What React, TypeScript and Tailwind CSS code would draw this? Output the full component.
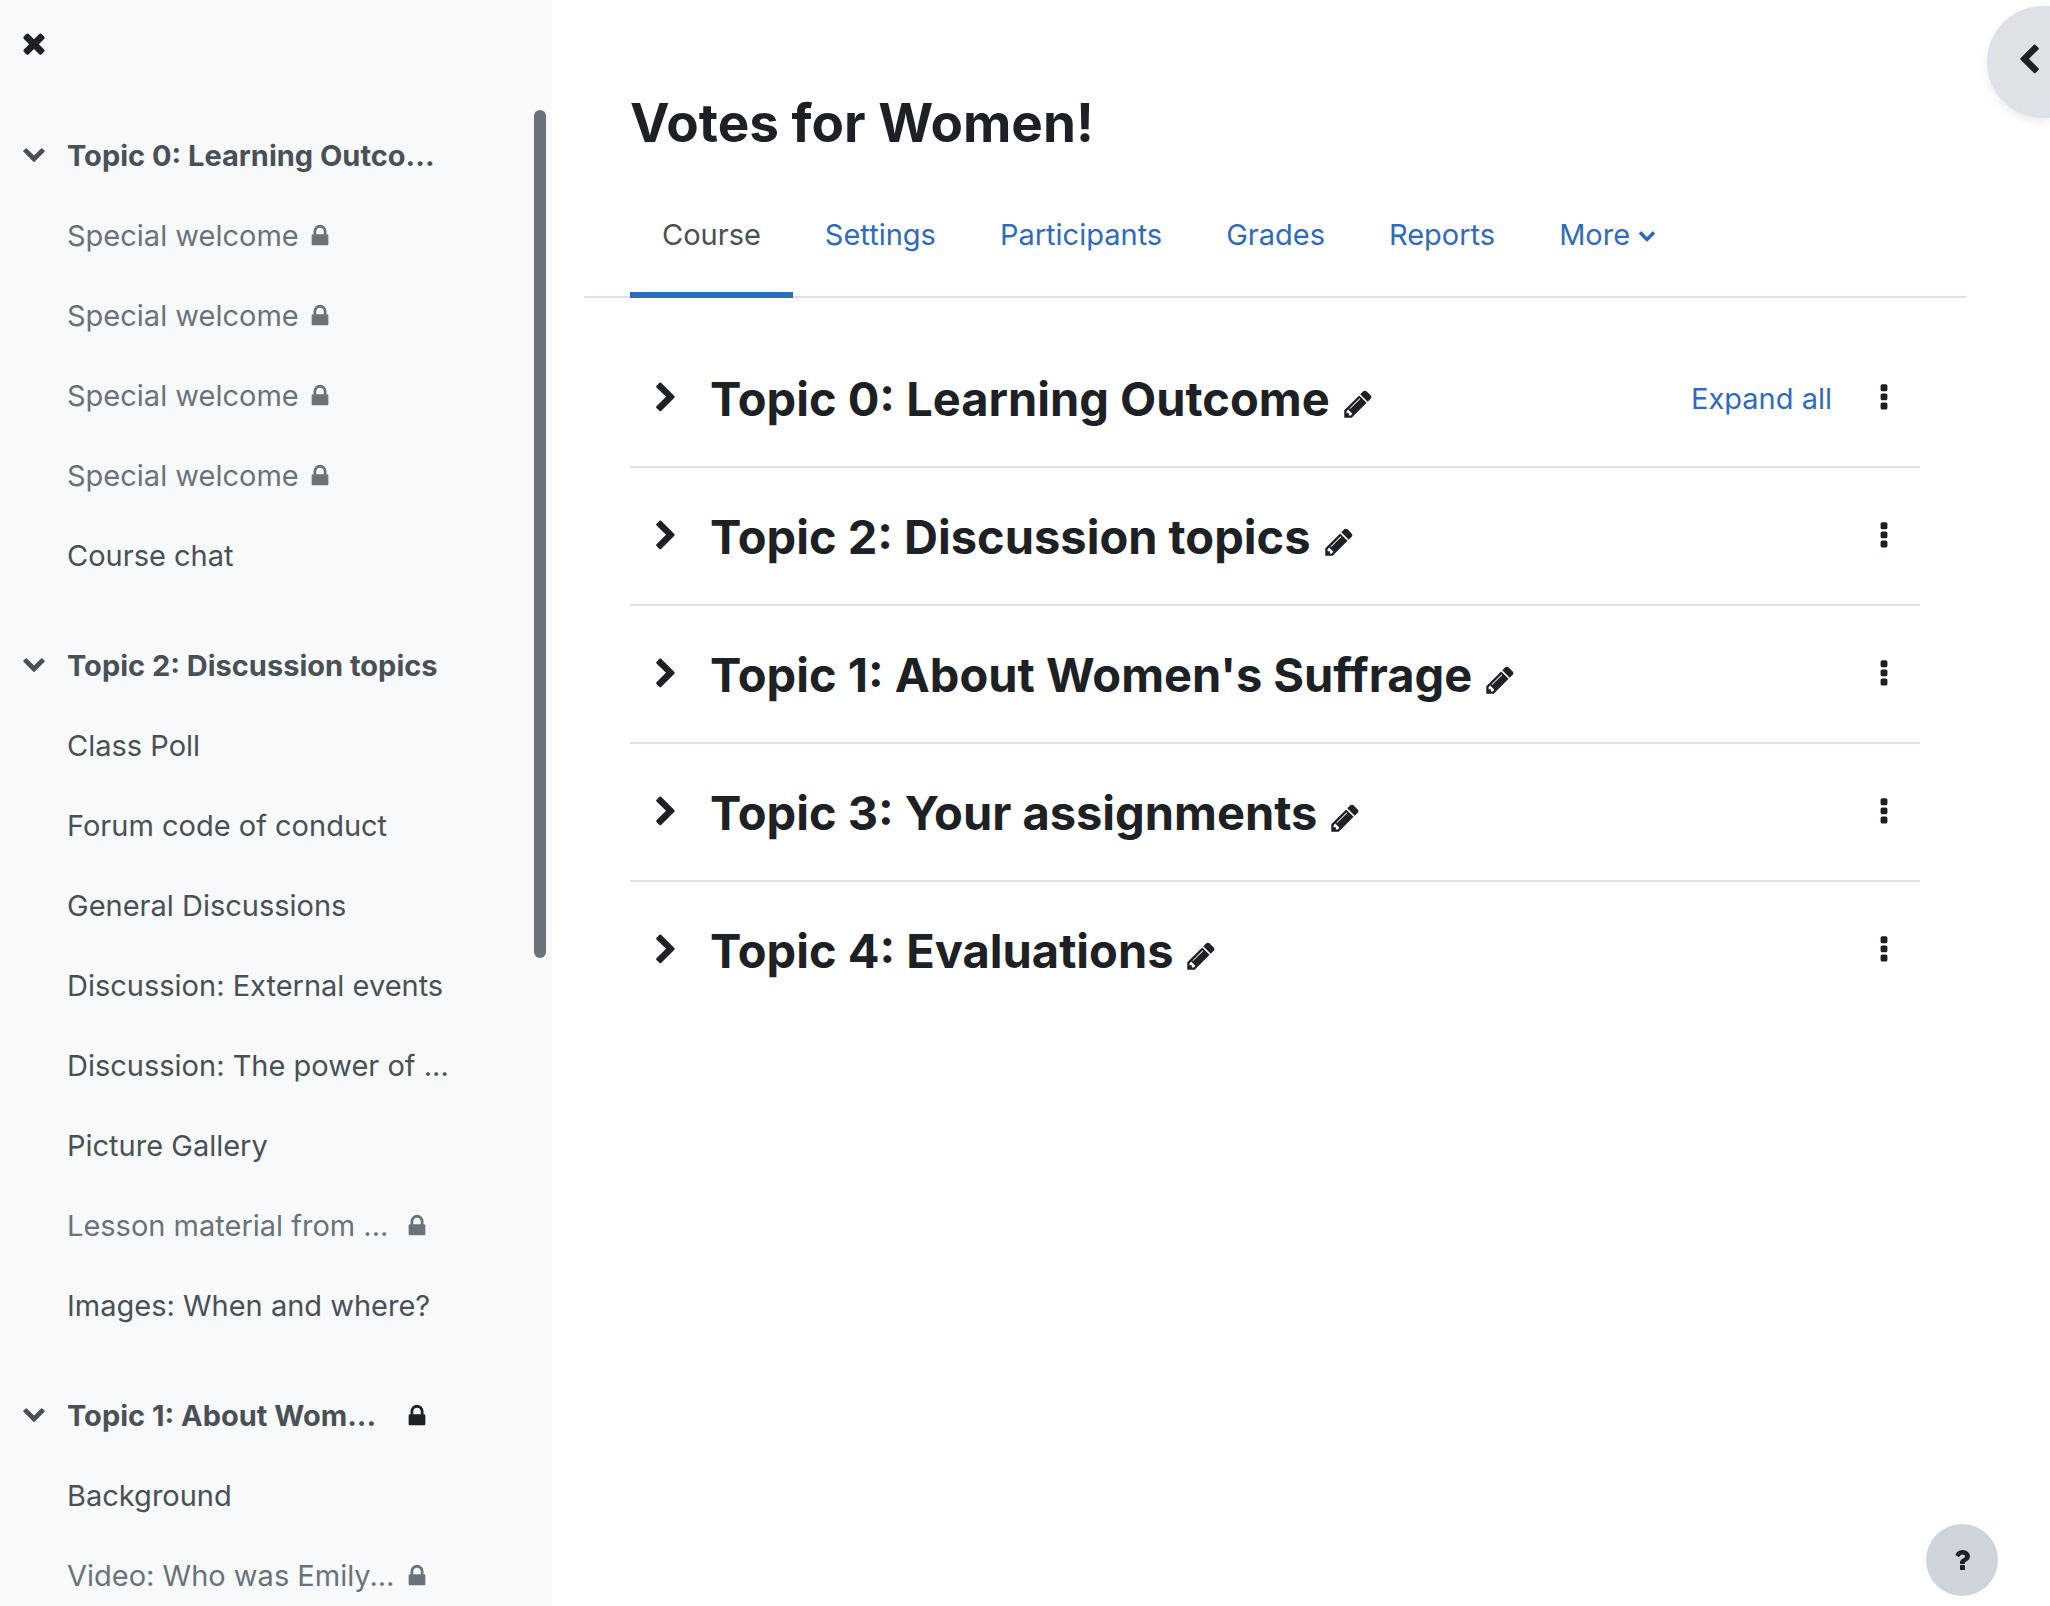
import { useState } from "react";
import { clsx } from "clsx";

const icons = {
  times: "M1490 1322q0 40-28 68l-136 136q-28 28-68 28t-68-28l-294-294-294 294q-28 28-68 28t-68-28l-136-136q-28-28-28-68t28-68l294-294-294-294q-28-28-28-68t28-68l136-136q28-28 68-28t68 28l294 294 294-294q28-28 68-28t68 28l136 136q28 28 28 68t-28 68l-294 294 294 294q28 28 28 68z",
  chevronRight: "M1363 877l-742 742q-19 19-45 19t-45-19l-166-166q-19-19-19-45t19-45l531-531-531-531q-19-19-19-45t19-45l166-166q19-19 45-19t45 19l742 742q19 19 19 45t-19 45z",
  chevronLeft: "M1427 301l-531 531 531 531q19 19 19 45t-19 45l-166 166q-19 19-45 19t-45-19l-742-742q-19-19-19-45t19-45l742-742q19-19 45-19t45 19l166 166q19 19 19 45t-19 45z",
  chevronDown: "M1683 808l-742 741q-19 19-45 19t-45-19l-742-741q-19-19-19-45.500t19-45.500l166-165q19-19 45-19t45 19l531 531 531-531q19-19 45-19t45 19l166 165q19 19 19 45.500t-19 45.500z",
  lock: "M640 768h512v-192q0-106-75-181t-181-75-181 75-75 181v192zm832 96v576q0 40-28 68t-68 28h-960q-40 0-68-28t-28-68v-576q0-40 28-68t68-28h32v-192q0-184 132-316t316-132 316 132 132 316v192h32q40 0 68 28t28 68z",
  pencil: "M491 1536l91-91-235-235-91 91v107h128v128h107zm523-928q0-22-22-22-10 0-17 7l-542 542q-7 7-7 17 0 22 22 22 10 0 17-7l542-542q7-7 7-17zm-54-192l416 416-832 832h-416v-416zm683 96q0 53-37 90l-166 166-416-416 166-165q36-38 90-38 53 0 91 38l235 234q37 39 37 91z",
  ellipsis: "M1088 1248v192q0 40-28 68t-68 28h-192q-40 0-68-28t-28-68v-192q0-40 28-68t68-28h192q40 0 68 28t28 68zm0-512v192q0 40-28 68t-68 28h-192q-40 0-68-28t-28-68v-192q0-40 28-68t68-28h192q40 0 68 28t28 68zm0-512v192q0 40-28 68t-68 28h-192q-40 0-68-28t-28-68v-192q0-40 28-68t68-28h192q40 0 68 28t28 68z",
  question: "M1088 1256v240q0 16-12 28t-28 12h-240q-16 0-28-12t-12-28v-240q0-16 12-28t28-12h240q16 0 28 12t12 28zm316-600q0 54-15.500 101t-35 76.500-55 59.500-57.500 43.500-61 35.500q-41 23-68.500 65t-27.500 67q0 17-12 32.500t-28 15.500h-240q-15 0-25.500-18.500t-10.500-37.500v-45q0-83 65-156.500t143-108.500q59-27 84-56t25-76q0-42-46.500-74t-107.500-32q-65 0-108 29-35 25-107 115-13 16-31 16-12 0-25-8l-164-125q-13-10-15.500-25t5.500-28q160-266 464-266 80 0 161 31t146 83 106 127.500 41 158.500z",
};

const Icon = ({ name, className }: { name: keyof typeof icons; className: string }) => (
  <svg viewBox="0 0 1792 1792" fill="currentColor" aria-hidden="true" className={clsx("shrink-0", className)}>
    <path d={icons[name]} />
  </svg>
);

type Item = { title: string; locked?: boolean };

const sections: { title: string; locked?: boolean; items: Item[] }[] = [
  {
    title: "Topic 0: Learning Outco...",
    items: [
      { title: "Special welcome", locked: true },
      { title: "Special welcome", locked: true },
      { title: "Special welcome", locked: true },
      { title: "Special welcome", locked: true },
      { title: "Course chat" },
    ],
  },
  {
    title: "Topic 2: Discussion topics",
    items: [
      { title: "Class Poll" },
      { title: "Forum code of conduct" },
      { title: "General Discussions" },
      { title: "Discussion: External events" },
      { title: "Discussion: The power of ..." },
      { title: "Picture Gallery" },
      { title: "Lesson material from ...", locked: true },
      { title: "Images: When and where?" },
    ],
  },
  {
    title: "Topic 1: About Wom...",
    locked: true,
    items: [
      { title: "Background" },
      { title: "Video: Who was Emily...", locked: true },
    ],
  },
];

const tabs = ["Course", "Settings", "Participants", "Grades", "Reports"];

const topics = [
  "Topic 0: Learning Outcome",
  "Topic 2: Discussion topics",
  "Topic 1: About Women's Suffrage",
  "Topic 3: Your assignments",
  "Topic 4: Evaluations",
];

// shortened titles fill the column, so their lock sits at its right edge
const titleWidth = (title: string) => (title.endsWith("...") ? "w-[329px]" : "");

const CourseIndex = () => (
  <aside className="relative w-[552px] h-screen shrink-0 overflow-hidden bg-[#f8f9fb] text-[#495057]">
    <div className="h-[110px] px-[18px] pt-[27px]">
      <button aria-label="Close course index" className="block text-[#1d2125]">
        <Icon name="times" className="size-8" />
      </button>
    </div>
    <nav aria-label="Course index" className="pt-1.5">
      {sections.map((section) => (
        <div key={section.title} className="mb-[30px]">
          <div className="flex items-center h-20 pl-[22px]">
            <button aria-label={`Collapse ${section.title}`} className="mr-[21px] mb-1.5">
              <Icon name="chevronDown" className="size-6" />
            </button>
            <a href="#" className={clsx("font-bold whitespace-nowrap", section.locked && titleWidth(section.title))}>
              {section.title}
            </a>
            {section.locked && <Icon name="lock" className="size-[26px] ml-2 text-[#1d2125]" />}
          </div>
          <ul>
            {section.items.map((item, i) => (
              <li key={i} className={clsx("flex items-center h-20 pl-[67px]", item.locked && "text-[#6a737b]")}>
                <a href="#" className={clsx("whitespace-nowrap", item.locked && titleWidth(item.title))}>
                  {item.title}
                </a>
                {item.locked && <Icon name="lock" className="size-[26px] ml-2" />}
              </li>
            ))}
          </ul>
        </div>
      ))}
    </nav>
    {/* SCROLLBAR */}
    <div className="absolute top-[110px] right-1.5 w-3 h-[848px] rounded-full bg-[#6a737b]" />
  </aside>
);

const App = () => {
  const [activeTab, setActiveTab] = useState("Course");

  return (
    <div className="flex h-screen overflow-hidden bg-white text-[#1d2125] text-[29px] leading-[44px] font-['Inter',sans-serif]">
      <CourseIndex />

      <main className="flex-1 min-w-0 pl-8 pr-[84px] pt-[89px]">
        <h1 className="pl-[46px] text-[53px] leading-[68px] font-bold">Votes for Women!</h1>

        {/* TABS */}
        <nav className="flex mt-[23px] px-[46px] border-b-2 border-[#dee2e6]">
          {tabs.map((tab) => (
            <button
              key={tab}
              onClick={() => setActiveTab(tab)}
              className={clsx(
                "h-[118px] -mb-0.5 px-8 pb-0.5 border-b-6",
                activeTab === tab ? "border-[#306bbb] text-[#495057]" : "border-transparent text-[#306bbb]"
              )}
            >
              {tab}
            </button>
          ))}
          <button className="flex items-center gap-2 h-[118px] -mb-0.5 px-8 pb-0.5 border-b-6 border-transparent text-[#306bbb]">
            More
            <Icon name="chevronDown" className="size-[18px]" />
          </button>
        </nav>

        {/* TOPICS */}
        <ul className="mx-[46px] mt-8">
          {topics.map((topic, i) => (
            <li key={topic} className="flex items-center h-[138px] px-5 border-b-2 border-[#dee2e6] last:border-b-transparent">
              <button aria-label={`Expand ${topic}`} className="mr-7">
                <Icon name="chevronRight" className="size-8" />
              </button>
              <h2 className="mt-0.5 text-[47px] leading-[60px] font-bold">{topic}</h2>
              <button aria-label={`Edit ${topic}`} className="ml-3 mt-3">
                <Icon name="pencil" className="size-8" />
              </button>
              {i === 0 && (
                <a href="#" className="ml-auto mt-0.5 text-[#306bbb]">
                  Expand all
                </a>
              )}
              <button aria-label={`Actions for ${topic}`} className={i === 0 ? "ml-9" : "ml-auto"}>
                <Icon name="ellipsis" className="size-8" />
              </button>
            </li>
          ))}
        </ul>
      </main>

      {/* DRAWER TOGGLE */}
      <button
        aria-label="Open block drawer"
        className="fixed top-1.5 right-0 flex items-center pl-[26px] pb-1 w-[63px] h-28 rounded-l-full bg-[#dee2e6] shadow-[0_4px_8px_rgba(0,0,0,0.08)]"
      >
        <Icon name="chevronLeft" className="size-8" />
      </button>

      <button
        aria-label="Help"
        className="fixed bottom-2.5 right-[52px] flex items-center justify-center size-[72px] rounded-full bg-[#ced4da]"
      >
        <Icon name="question" className="size-7" />
      </button>
    </div>
  );
};

export default App;
